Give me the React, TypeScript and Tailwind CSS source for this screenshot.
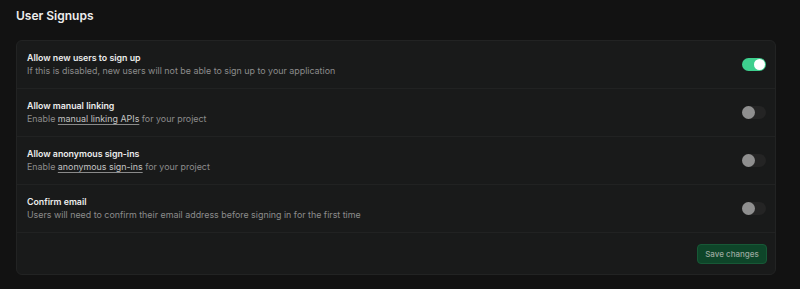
import React from "react";

function Toggle({ on }: { on: boolean }) {
  return on ? (
    <div className="w-[24px] h-[13px] rounded-full bg-[#3ecf8e] flex items-center justify-end pr-[1px]">
      <div className="w-[11px] h-[11px] rounded-full bg-white" />
    </div>
  ) : (
    <div className="w-[24px] h-[13px] rounded-full bg-[#242424] flex items-center justify-start">
      <div className="w-[13px] h-[13px] rounded-full bg-[#8f8f8f]" />
    </div>
  );
}

const rows = [
  {
    title: "Allow new users to sign up",
    desc: <>If this is disabled, new users will not be able to sign up to your application</>,
    on: true,
  },
  {
    title: "Allow manual linking",
    desc: (
      <>
        Enable <span className="text-[#c4c4c4] underline underline-offset-2 decoration-[#8a8a8a]">manual linking APIs</span> for your project
      </>
    ),
    on: false,
  },
  {
    title: "Allow anonymous sign-ins",
    desc: (
      <>
        Enable <span className="text-[#c4c4c4] underline underline-offset-2 decoration-[#8a8a8a]">anonymous sign-ins</span> for your project
      </>
    ),
    on: false,
  },
  {
    title: "Confirm email",
    desc: <>Users will need to confirm their email address before signing in for the first time</>,
    on: false,
  },
];

export default function App() {
  return (
    <div
      className="w-[800px] h-[289px] bg-[#121212] px-4 pt-[7px]"
      style={{ fontFamily: "Inter, 'Noto Sans', sans-serif" }}
    >
      <h1 className="text-[12px] leading-[18px] font-semibold text-[#ededed]">User Signups</h1>
      <div className="mt-[15px] w-[760px] bg-[#191a1a] border border-[#222323] rounded-[6px]">
        {rows.map((r, i) => (
          <div key={i} className="h-[48px] flex items-center justify-between pl-[10px] pr-[9px] border-b border-[#212222]">
            <div>
              <div className="text-[8.8px] leading-[12px] font-semibold text-[#ededed]">{r.title}</div>
              <div className="text-[8.9px] leading-[12px] text-[#8c8c8c] mt-[1px]">{r.desc}</div>
            </div>
            <Toggle on={r.on} />
          </div>
        ))}
        <div className="h-[41px] flex items-center justify-end pr-[8px]">
          <button className="h-[20px] w-[70px] rounded-[4px] bg-[#0e4529] border border-[#175836] text-[8px] font-medium text-[#9aa89f]">
            Save changes
          </button>
        </div>
      </div>
    </div>
  );
}
